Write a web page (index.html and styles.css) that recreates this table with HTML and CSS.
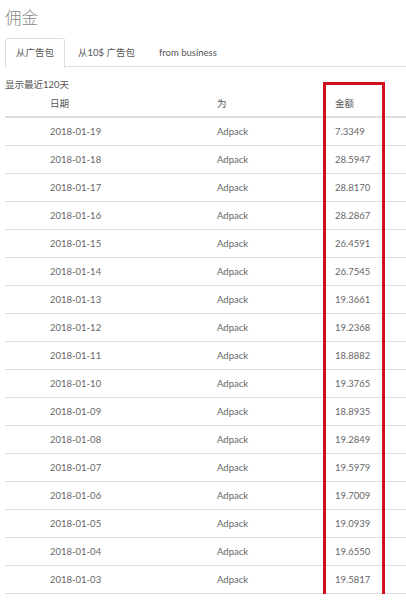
FILE: index.html
```html
<!DOCTYPE html>
<html>
<head>
<meta charset="utf-8">
<link rel="stylesheet" href="styles.css">
</head>
<body>
<div class="page">
  <h1 class="title">佣金</h1>
  <div class="tabs">
    <div class="tab active">从广告包</div>
    <div class="tab">从10$ 广告包</div>
    <div class="tab">from business</div>
  </div>
  <div class="note">显示最近120天</div>
  <div class="table">
    <div class="row head"><span>日期</span><span>为</span><span>金额</span></div>
    <div class="row"><span>2018-01-19</span><span>Adpack</span><span>7.3349</span></div>
    <div class="row"><span>2018-01-18</span><span>Adpack</span><span>28.5947</span></div>
    <div class="row"><span>2018-01-17</span><span>Adpack</span><span>28.8170</span></div>
    <div class="row"><span>2018-01-16</span><span>Adpack</span><span>28.2867</span></div>
    <div class="row"><span>2018-01-15</span><span>Adpack</span><span>26.4591</span></div>
    <div class="row"><span>2018-01-14</span><span>Adpack</span><span>26.7545</span></div>
    <div class="row"><span>2018-01-13</span><span>Adpack</span><span>19.3661</span></div>
    <div class="row"><span>2018-01-12</span><span>Adpack</span><span>19.2368</span></div>
    <div class="row"><span>2018-01-11</span><span>Adpack</span><span>18.8882</span></div>
    <div class="row"><span>2018-01-10</span><span>Adpack</span><span>19.3765</span></div>
    <div class="row"><span>2018-01-09</span><span>Adpack</span><span>18.8935</span></div>
    <div class="row"><span>2018-01-08</span><span>Adpack</span><span>19.2849</span></div>
    <div class="row"><span>2018-01-07</span><span>Adpack</span><span>19.5979</span></div>
    <div class="row"><span>2018-01-06</span><span>Adpack</span><span>19.7009</span></div>
    <div class="row"><span>2018-01-05</span><span>Adpack</span><span>19.0939</span></div>
    <div class="row"><span>2018-01-04</span><span>Adpack</span><span>19.6550</span></div>
    <div class="row"><span>2018-01-03</span><span>Adpack</span><span>19.5817</span></div>
    <div class="highlight"></div>
  </div>
</div>
</body>
</html>
```

FILE: styles.css
```css
html, body {
  margin: 0;
  padding: 0;
  background: #fff;
}
body {
  font-family: Lato, "Noto Sans CJK SC", sans-serif;
  color: #666;
  overflow: hidden;
}
.page {
  padding: 0 0 0 5px;
}
.title {
  margin: 0;
  padding-top: 7px;
  height: 31px;
  font-size: 16.5px;
  font-weight: 300;
  color: #888;
  line-height: 22px;
}
.tabs {
  display: flex;
  height: 28px;
  border-bottom: 1px solid #ddd;
}
.tab {
  font-size: 9.5px;
  color: #555;
  padding: 0 10px;
  margin-right: 2px;
  line-height: 28px;
  height: 28px;
  border: 1px solid transparent;
  border-bottom: none;
  border-radius: 3px 3px 0 0;
}
.tab.active {
  border-color: #ddd;
  background: #fff;
  height: 29px;
}
.note {
  font-size: 9.5px;
  color: #555;
  margin-top: 11px;
  line-height: 14px;
}
.table {
  position: relative;
  font-size: 9.5px;
}
.row {
  display: grid;
  grid-template-columns: 45px 167px 118px 1fr;
  height: 28px;
  line-height: 27px;
  border-bottom: 1px solid #ddd;
  box-sizing: border-box;
}
.row span:first-child { grid-column: 2; }
.row.head {
  height: 26px;
  line-height: 24px;
  border-bottom: 2px solid #ddd;
  color: #555;
}
.highlight {
  position: absolute;
  left: 318px;
  top: -10px;
  width: 62px;
  height: 515px;
  border: 3px solid #d0101c;
  box-sizing: border-box;
}
```
